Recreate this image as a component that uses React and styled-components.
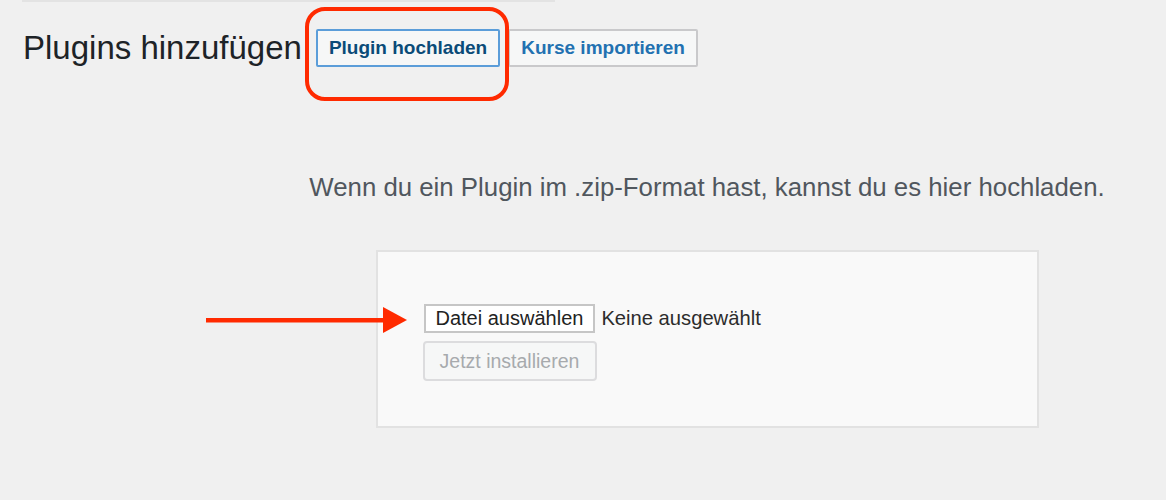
import React from 'react';
import styled, { createGlobalStyle } from 'styled-components';

const GlobalStyle = createGlobalStyle`
  html, body {
    margin: 0;
    padding: 0;
    background: #f0f0f0;
    font-family: "Liberation Sans", Arial, sans-serif;
  }
`;

const Page = styled.div`
  position: relative;
  width: 1166px;
  height: 500px;
  overflow: hidden;
`;

const TopRule = styled.div`
  margin-left: 22px;
  width: 533px;
  height: 2px;
  background: #e3e3e3;
`;

const HeaderRow = styled.div`
  display: flex;
  align-items: center;
  height: 38px;
  margin-top: 27px;
  padding-left: 23px;
`;

const Title = styled.h1`
  margin: 0 14px 0 0;
  font-size: 33px;
  line-height: 38px;
  font-weight: 400;
  color: #1d2327;
`;

const TabButton = styled.button`
  box-sizing: border-box;
  height: 38px;
  padding: 0 11px;
  margin-left: ${p => (p.$spaced ? '8px' : '0')};
  font-family: inherit;
  font-size: 19px;
  font-weight: 700;
  background: #f6f7f7;
  color: ${p => (p.$active ? '#0a4b78' : '#2271b1')};
  border: 2px solid ${p => (p.$active ? '#5b9dd9' : '#c9c9cb')};
  border-radius: 2px;
  cursor: pointer;
`;

const UploadSection = styled.section`
  margin-left: 248px;
  text-align: center;
`;

const Help = styled.p`
  margin: 105px 0 0;
  font-size: 25.8px;
  line-height: 30px;
  color: #50575e;
`;

const UploadBox = styled.form`
  box-sizing: border-box;
  width: 663px;
  height: 178px;
  margin: 48px auto 0;
  padding: 52px 46px 45px;
  background: #f9f9f9;
  border: 2px solid #e2e2e2;
  text-align: left;
`;

const FileRow = styled.div`
  display: flex;
  align-items: center;
  height: 29px;
`;

const FileButton = styled.label`
  box-sizing: border-box;
  height: 29px;
  padding: 0 10px;
  display: flex;
  align-items: center;
  background: #fff;
  border: 2px solid #c6c6c6;
  font-size: 20px;
  color: #222;
  cursor: pointer;
`;

const FileName = styled.span`
  margin-left: 6px;
  font-size: 20.2px;
  color: #2c2c2c;
`;

const InstallButton = styled.button`
  box-sizing: border-box;
  display: block;
  width: 174px;
  height: 40px;
  margin-top: 8px;
  margin-left: -1px;
  font-family: inherit;
  font-size: 19.5px;
  color: #a7aaad;
  background: #f6f7f7;
  border: 2px solid #dcdcde;
  border-radius: 4px;
`;

// red annotation marks drawn on top of the page
const Highlight = styled.div`
  position: absolute;
  left: 305px;
  top: 7px;
  width: 204px;
  height: 94px;
  box-sizing: border-box;
  border: 4px solid #ff2a00;
  border-radius: 20px;
  pointer-events: none;
`;

const ArrowMark = styled.svg`
  position: absolute;
  left: 206px;
  top: 307px;
  pointer-events: none;
`;

const App = () => {
  return (
    <Page>
      <GlobalStyle />
      <TopRule />
      <HeaderRow>
        <Title>Plugins hinzufügen</Title>
        <TabButton $active>Plugin hochladen</TabButton>
        <TabButton $spaced>Kurse importieren</TabButton>
      </HeaderRow>

      <UploadSection>
        <Help>Wenn du ein Plugin im .zip-Format hast, kannst du es hier hochladen.</Help>
        <UploadBox onSubmit={e => e.preventDefault()}>
          <FileRow>
            <FileButton>Datei auswählen</FileButton>
            <FileName>Keine ausgewählt</FileName>
          </FileRow>
          <InstallButton type="submit" disabled>Jetzt installieren</InstallButton>
        </UploadBox>
      </UploadSection>

      <Highlight />
      <ArrowMark width="202" height="26" viewBox="0 0 202 26">
        <rect x="0" y="11" width="178" height="4.5" fill="#ff2a00" />
        <polygon points="177,0 201,13 177,26" fill="#ff2a00" />
      </ArrowMark>
    </Page>
  );
};

export default App;
